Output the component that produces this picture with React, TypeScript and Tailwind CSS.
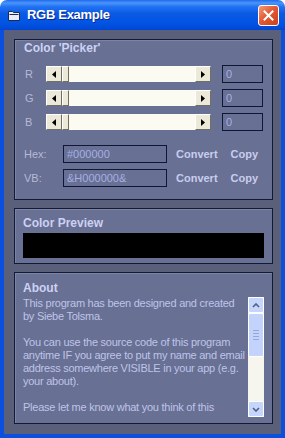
import React from 'react';

function Arrow({ dir }: { dir: 'left' | 'right' }) {
  return (
    <div className="flex h-4 w-4 shrink-0 items-center justify-center border border-t-white border-l-white border-b-[#716f64] border-r-[#716f64] bg-[#ece9d8]">
      <svg width="4" height="7" viewBox="0 0 4 7">
        {dir === 'left' ? <path d="M4 0 L0 3.5 L4 7 Z" fill="#000" /> : <path d="M0 0 L4 3.5 L0 7 Z" fill="#000" />}
      </svg>
    </div>
  );
}

function Slider() {
  return (
    <div className="flex h-4 w-[165px] bg-[#fbfbf1]">
      <Arrow dir="left" />
      <div className="h-4 w-[7px] border border-t-white border-l-white border-b-[#716f64] border-r-[#716f64] bg-[#ece9d8]" />
      <div className="flex-1" />
      <Arrow dir="right" />
    </div>
  );
}

function Box({ value, w }: { value: string; w: string }) {
  return (
    <div className={`${w} flex h-[18px] items-center border border-[#0f1636] pl-[3px] text-[11px] leading-none text-[#a7afe4]`}>
      {value}
    </div>
  );
}

function Frame({ children, className }: { children: React.ReactNode; className?: string }) {
  return (
    <div className={`border border-[#141a36] bg-[#687093] shadow-[inset_1px_1px_0_#7c84a6] ${className ?? ''}`}>
      {children}
    </div>
  );
}

const aboutLines = [
  'This program has been designed and created',
  'by Siebe Tolsma.',
  '',
  'You can use the source code of this program',
  'anytime IF you agree to put my name and email',
  'address somewhere VISIBLE in your app (e.g.',
  'your about).',
  '',
  'Please let me know what you think of this',
];

export default function App() {
  return (
    <div className="h-[438px] w-[285px] bg-white font-['Liberation_Sans',Arial,sans-serif]">
      <div className="flex h-full flex-col">
        {/* title bar */}
        <div className="flex h-[30px] shrink-0 items-center rounded-t-[7px] bg-[linear-gradient(180deg,#1f6cec_0%,#4b94fb_10%,#2273f2_22%,#0a5ae6_45%,#0253e2_80%,#0145d2_100%)] pl-[8px] pr-[6px]">
          <svg width="12" height="11" viewBox="0 0 12 11" className="shrink-0">
            <path d="M0.5 1.5 H4.5 L5.5 2.5 H11.5 V10.5 H0.5 Z" fill="#e8ecf4" stroke="#1a2a50" />
            <path d="M1.5 4.5 H10.5" stroke="#1a2a50" />
          </svg>
          <span className="ml-[7px] text-[13px] font-bold tracking-[-0.3px] text-white [text-shadow:1px_1px_0_#0a2a8a]">RGB Example</span>
          <div className="ml-auto flex h-[21px] w-[21px] items-center justify-center rounded-[3px] border border-white bg-[linear-gradient(135deg,#f39a7a_0%,#e45a34_45%,#c9401c_100%)]">
            <svg width="11" height="11" viewBox="0 0 11 11">
              <path d="M1.5 1.5 L9.5 9.5 M9.5 1.5 L1.5 9.5" stroke="#fff" strokeWidth="2" strokeLinecap="square" />
            </svg>
          </div>
        </div>

        {/* body */}
        <div className="flex flex-1 flex-col border-x-4 border-b-4 border-[#0a4fdd] bg-[#5a6079] pb-[10px] pl-[10px] pr-[8px] pt-[9px]">
          <Frame className="h-[161px] pl-[9px] pr-[8px] pt-[1px]">
            <div className="h-[15px] text-[12px] font-bold leading-[15px] text-[#cdd1f4]">Color 'Picker'</div>
            <div className="mt-[9px] flex flex-col gap-[6px]">
              {['R', 'G', 'B'].map((c) => (
                <div key={c} className="flex h-[18px] items-center">
                  <span className="w-[22px] pl-[1px] text-[11px] text-[#b6bad8]">{c}</span>
                  <Slider />
                  <div className="ml-[11px]">
                    <Box value="0" w="w-[41px]" />
                  </div>
                </div>
              ))}
            </div>
            <div className="mt-[14px] flex flex-col gap-[6px]">
              {[
                ['Hex:', '#000000'],
                ['VB:', '&H000000&'],
              ].map(([l, v]) => (
                <div key={l} className="flex h-[18px] items-center">
                  <span className="w-[39px] text-[11px] text-[#b6bad8]">{l}</span>
                  <Box value={v} w="w-[104px]" />
                  <span className="ml-[9px] text-[11px] font-bold text-[#c9cdef]">Convert</span>
                  <span className="ml-[13px] text-[11px] font-bold text-[#c9cdef]">Copy</span>
                </div>
              ))}
            </div>
          </Frame>

          <Frame className="mt-[8px] h-[56px] pl-[8px] pr-[8px] pt-[7px]">
            <div className="h-[15px] text-[12px] font-bold leading-[15px] text-[#cdd1f4]">Color Preview</div>
            <div className="mt-[2px] h-[25px] bg-black" />
          </Frame>

          <Frame className="mt-[8px] flex-1 pl-[8px] pr-[8px] pt-[8px]">
            <div className="h-[15px] text-[12px] font-bold leading-[15px] text-[#cdd1f4]">About</div>
            <div className="mt-[1px] flex h-[120px]">
              <div className="flex-1 overflow-hidden text-[11px] leading-[13px] tracking-[-0.25px] text-[#bfc4ea]">
                {aboutLines.map((l, i) => (
                  <div key={i} className="h-[13px] whitespace-nowrap">{l}</div>
                ))}
              </div>
              <div className="flex w-4 flex-col bg-[#f7f6ee]">
                <div className="flex h-4 items-center justify-center rounded-[2px] border border-white bg-[#c6d5fb]">
                  <svg width="8" height="5" viewBox="0 0 8 5">
                    <path d="M1 4 L4 1 L7 4" stroke="#4d6185" strokeWidth="1.6" fill="none" />
                  </svg>
                </div>
                <div className="flex h-[44px] flex-col items-center justify-center gap-[2px] rounded-[2px] border border-white bg-[#c3d3fc]">
                  <div className="h-px w-[6px] bg-[#8fa8e0]" />
                  <div className="h-px w-[6px] bg-[#8fa8e0]" />
                  <div className="h-px w-[6px] bg-[#8fa8e0]" />
                  <div className="h-px w-[6px] bg-[#8fa8e0]" />
                </div>
                <div className="flex-1" />
                <div className="flex h-4 items-center justify-center rounded-[2px] border border-white bg-[#c6d5fb]">
                  <svg width="8" height="5" viewBox="0 0 8 5">
                    <path d="M1 1 L4 4 L7 1" stroke="#4d6185" strokeWidth="1.6" fill="none" />
                  </svg>
                </div>
              </div>
            </div>
          </Frame>
        </div>
      </div>
    </div>
  );
}
